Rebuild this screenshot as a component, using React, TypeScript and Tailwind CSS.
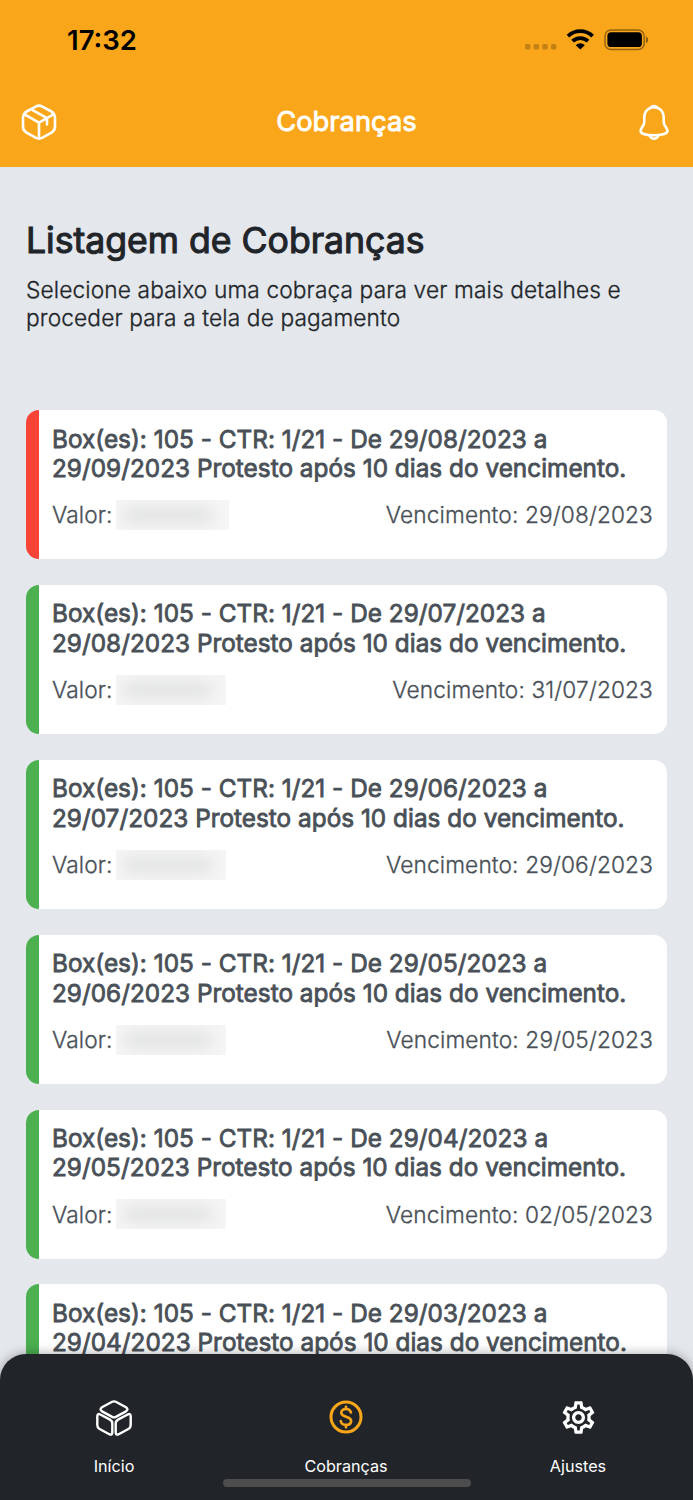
import type { ReactNode } from 'react';
import { MdOutlineSettings } from 'react-icons/md';

interface Charge {
  from: string;
  to: string;
  due: string;
  overdue?: boolean;
}

const CHARGES: Charge[] = [
  { from: '29/08/2023', to: '29/09/2023', due: '29/08/2023', overdue: true },
  { from: '29/07/2023', to: '29/08/2023', due: '31/07/2023' },
  { from: '29/06/2023', to: '29/07/2023', due: '29/06/2023' },
  { from: '29/05/2023', to: '29/06/2023', due: '29/05/2023' },
  { from: '29/04/2023', to: '29/05/2023', due: '02/05/2023' },
  { from: '29/03/2023', to: '29/04/2023', due: '29/03/2023' },
];

function StatusBar() {
  return (
    <div className="flex h-20 items-center justify-between pl-[67px] pr-[45px]">
      <span className="pt-px text-[27.500px] leading-none font-semibold text-black">17:32</span>
      <svg className="-mt-px" width="124" height="24" viewBox="0 0 124 24" fill="none">
        <g fill="#000" opacity="0.22">
          <rect x="1" y="16" width="5.4" height="5.4" rx="1.5" />
          <rect x="9.7" y="16" width="5.4" height="5.4" rx="1.5" />
          <rect x="18.3" y="16" width="5.4" height="5.4" rx="1.5" />
          <rect x="27" y="16" width="5.4" height="5.4" rx="1.5" />
        </g>
        <g stroke="#000" strokeWidth="3.8">
          <path d="M44 8.2a17.6 17.6 0 0 1 24.600 0" />
          <path d="M48.600 13.200a11 11 0 0 1 15.400 0" />
        </g>
        <path d="M51.800 17.300a6.200 6.200 0 0 1 9 0l-4.500 4.200z" fill="#000" />
        <rect x="81" y="1.900" width="39.200" height="19.600" rx="6" stroke="#000" strokeOpacity="0.4" strokeWidth="1.500" />
        <rect x="83.400" y="4.300" width="34.500" height="14.700" rx="3.600" fill="#000" />
        <path d="M122 8.500c3 1.200 3 5.400 0 6.600z" fill="#000" opacity="0.45" />
      </svg>
    </div>
  );
}

function PackageIcon() {
  return (
    <svg width="36" height="36" viewBox="0 0 36 36" fill="none" stroke="#fff" strokeWidth="2.600" strokeLinecap="round" strokeLinejoin="round">
      <path d="M15.200 2.300Q18 1 20.800 2.300L29.500 7Q34 9.500 34 14V22.500Q34 26.500 30.500 28.700L21 33.900Q18 35.200 15 33.900L5.500 28.700Q2 26.500 2 22.500V14Q2 9.500 6.500 7Z" />
      <path d="M3.500 10.300 18 18.600 32.500 10.300M18 18.600V34.500M10.300 5.300 26 14.200V20.500" />
    </svg>
  );
}

function BellIcon() {
  return (
    <svg width="30" height="36" viewBox="0 0 30 36" fill="none" stroke="#fff" strokeWidth="2.600" strokeLinecap="round" strokeLinejoin="round">
      <path d="M15 3.200C9 3.200 5.300 7.800 5.300 13.500V18.200C5.300 21.700 1.600 23.800 1.600 27C1.600 29.900 8 31.300 15 31.300S28.400 29.900 28.400 27C28.400 23.800 24.700 21.700 24.700 18.200V13.500C24.700 7.800 21 3.200 15 3.200Z" />
      <path d="M12.500 2.900Q15 1.100 17.500 2.900M10.600 31.500Q12 34.700 15 34.700T19.400 31.500" />
    </svg>
  );
}

function BoxesIcon() {
  return (
    <svg className="mt-0.5" width="36" height="36" viewBox="0 0 36 36" fill="none" stroke="#fff" strokeWidth="2.400" strokeLinejoin="round">
      <path d="M16.200 1.800Q18 .9 19.800 1.800L30 7.200Q32.900 9.300 30 11.400L19.800 16.900Q18 17.800 16.200 16.900L6 11.400Q3.100 9.300 6 7.200Z" />
      <path d="M4.300 14.500 14 19.600Q16.300 21 16.300 23.500V32.200Q16.300 35.600 13.300 34.200L3.200 28.700Q1.300 27.500 1.300 25V16.300Q1.300 13.100 4.300 14.500Z" />
      <path d="M31.700 14.500 22 19.600Q19.700 21 19.700 23.500V32.200Q19.700 35.600 22.700 34.200L32.800 28.700Q34.700 27.500 34.700 25V16.300Q34.700 13.100 31.700 14.500Z" />
    </svg>
  );
}

function MoneyIcon() {
  return (
    <svg width="34" height="34" viewBox="0 0 34 34" fill="none" stroke="#faa61a" strokeWidth="3" strokeLinecap="round" strokeLinejoin="round">
      <circle cx="17" cy="17" r="15" />
      <path strokeWidth="2.700" d="M21.900 12.400C21.300 10.300 19.600 9 17 9C14.200 9 12.300 10.600 12.300 12.800C12.300 17.900 22.100 15.500 22.100 21C22.100 23.400 20 24.900 17.100 24.900C14.200 24.900 12.200 23.500 11.800 21.100M17 6.800V9M17 24.900V27.200" />
    </svg>
  );
}

function ChargeCard({ charge }: { charge: Charge }) {
  return (
    <li
      className={`h-[149px] shrink-0 rounded-[13px] border-l-[13px] bg-white pt-[14.600px] pr-[14px] pl-[13px] text-[#495057] ${charge.overdue ? 'border-[#f84437]' : 'border-[#4caf50]'}`}
    >
      <h2 className="text-[24.300px] leading-[29.300px] tracking-[0.030px] [-webkit-text-stroke:0.8px]">
        Box(es): 105 - CTR: 1/21 - De {charge.from} a<br />
        {charge.to} Protesto após 10 dias do vencimento.
      </h2>
      <div className="mt-[16.200px] flex items-center justify-between text-[22.700px] leading-[30px] font-light tracking-[0.120px] [-webkit-text-stroke:0.3px]">
        <div className="flex items-center gap-[3px]">
          <span className="pt-px">Valor:</span>
          {/* amount stays hidden behind a blurred patch */}
          <span className={`flex h-[30px] items-center overflow-hidden bg-[#f6f6f6] ${charge.overdue ? 'w-[113px]' : 'w-[110px]'}`}>
            <span className="ml-1.5 h-4 w-[92px] rounded-full bg-[#e0e1e1] blur-[8px]" />
          </span>
        </div>
        <span className="pt-px">Vencimento: {charge.due}</span>
      </div>
    </li>
  );
}

function Tab({ icon, label }: { icon: ReactNode; label: string }) {
  return (
    <div className="flex w-[232px] shrink-0 flex-col items-center">
      <div className="flex h-10 items-center">{icon}</div>
      <span className="mt-[19px] text-[16.200px] leading-5 text-white">{label}</span>
    </div>
  );
}

export default function App() {
  return (
    <div className="flex h-[1500px] w-[693px] flex-col overflow-hidden bg-[#e4e7ec] font-['Inter',sans-serif] [font-optical-sizing:none]">
      <header className="h-[167px] shrink-0 bg-[#faa61a]">
        <StatusBar />
        <div className="flex h-[84px] items-center justify-between pr-6 pl-[21px]">
          <PackageIcon />
          <h1 className="-ml-[3px] pb-px text-[27.300px] leading-none text-white [-webkit-text-stroke:0.9px]">Cobranças</h1>
          <BellIcon />
        </div>
      </header>

      <main className="flex min-h-0 flex-1 flex-col overflow-hidden px-[26px] text-[#212529]">
        <h2 className="mt-[52px] text-[35.600px] leading-[43px] [-webkit-text-stroke:1.100px]">Listagem de Cobranças</h2>
        <p className="mt-[14px] text-[22.700px] leading-[27.500px] font-light tracking-[0.130px] [-webkit-text-stroke:0.3px]">
          Selecione abaixo uma cobraça para ver mais detalhes e<br />
          proceder para a tela de pagamento
        </p>
        <ul className="mt-[79px] flex flex-col gap-[25.900px]">
          {CHARGES.map((c) => (
            <ChargeCard key={c.from} charge={c} />
          ))}
        </ul>
      </main>

      <nav className="relative flex h-[146px] shrink-0 flex-col rounded-t-[26px] bg-[#212529] shadow-[0_0_12px_rgba(0,0,0,0.35)]">
        <div className="flex justify-center pt-[43px] pr-px">
          <Tab icon={<BoxesIcon />} label="Início" />
          <Tab icon={<MoneyIcon />} label="Cobranças" />
          <Tab icon={<MdOutlineSettings size={39} color="#fff" />} label="Ajustes" />
        </div>
        <div className="mx-auto mt-[2.500px] h-2 w-[248px] rounded-full bg-[#4d4d4d]" />
      </nav>
    </div>
  );
}
